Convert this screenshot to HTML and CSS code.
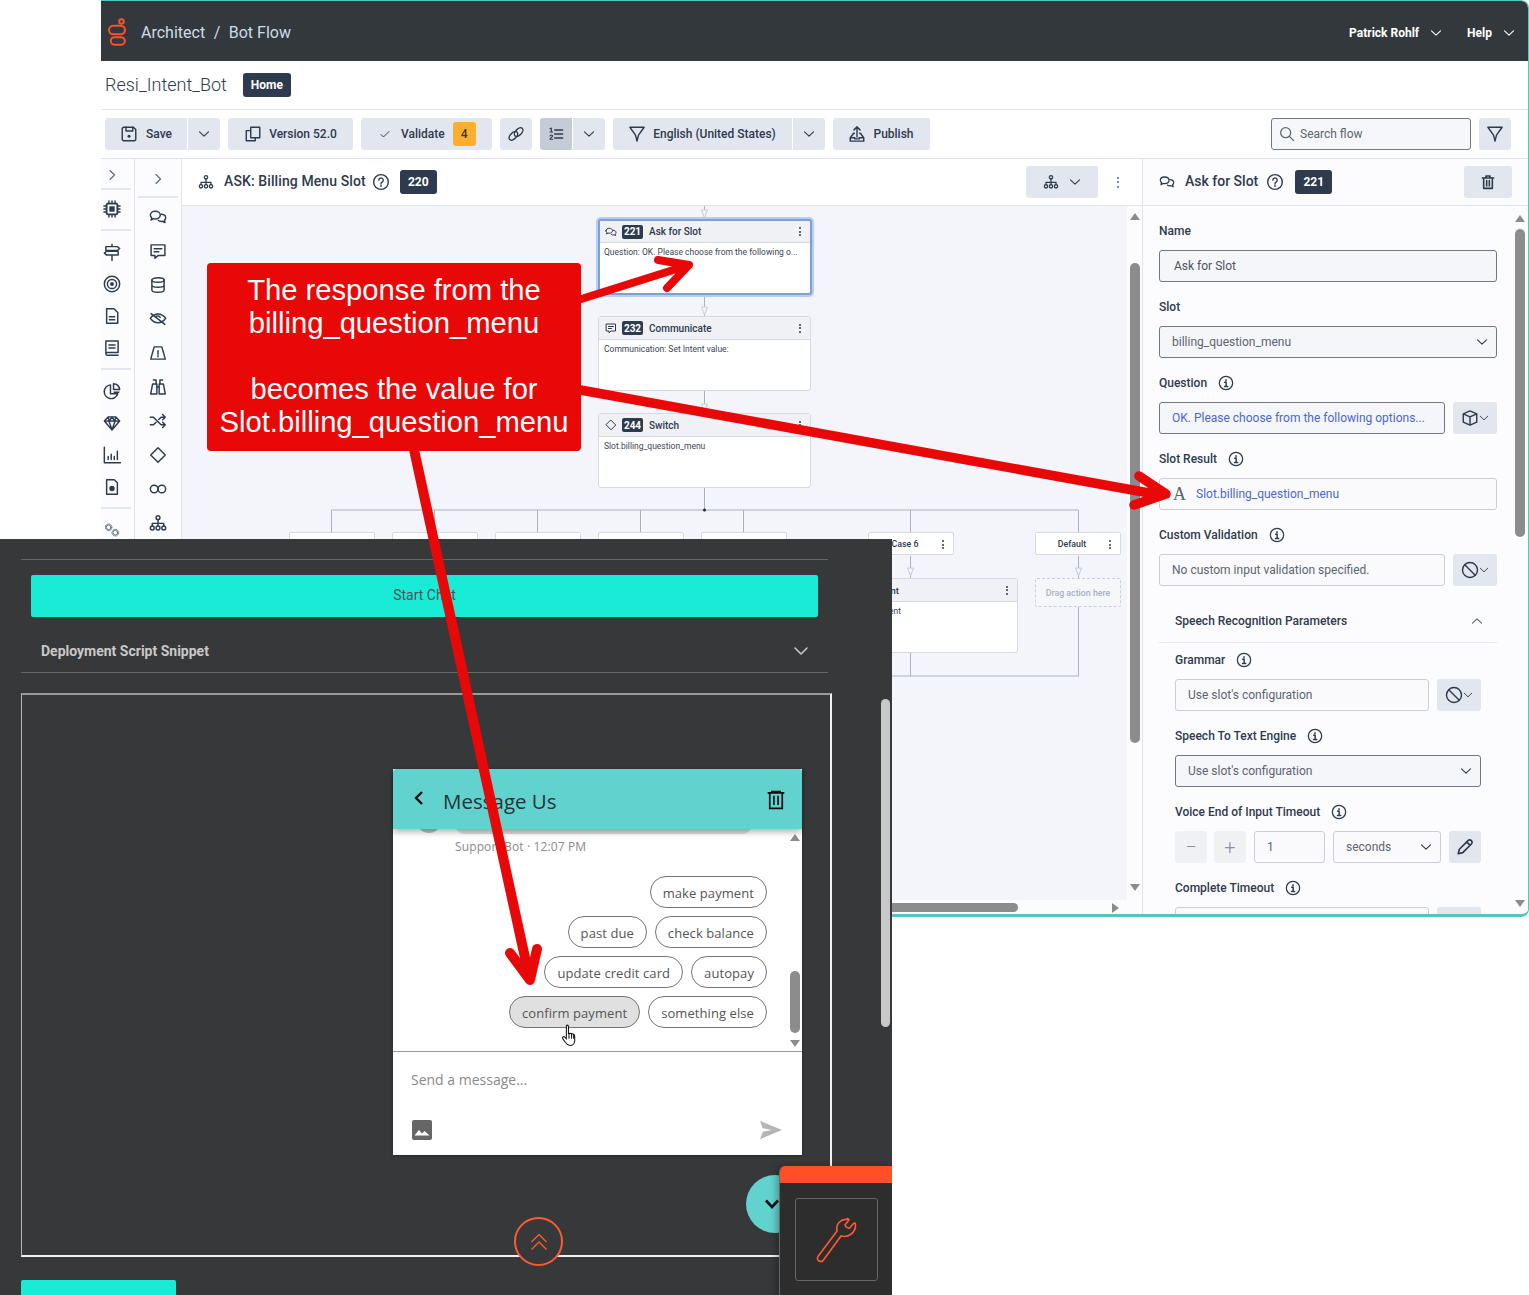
FILE: index.html
```html
<!DOCTYPE html>
<html lang="en">
<head>
<meta charset="utf-8">
<title>Architect - Bot Flow</title>
<link rel="stylesheet" href="styles.css">
</head>
<body>
<svg class="defs" aria-hidden="true">
  <symbol id="chev" viewBox="0 0 12 12"><path stroke-width="1.100" d="M1.500 3.800 6 8.200l4.500-4.400"/></symbol>
  <symbol id="chevr" viewBox="0 0 12 12"><path stroke-width="1.100" d="M4 1.500 8.500 6 4 10.500"/></symbol>
  <symbol id="chat" viewBox="0 0 24 24"><path d="M2 9.500C2 6.500 5 4.500 8.500 4.500s6.500 2 6.500 5-3 5-6.500 5c-1 0-1.800-.1-2.600-.4L3 16l.8-3C2.700 12 2 10.800 2 9.500z"/><path d="M16.500 8.500c3 .2 5.500 2 5.500 4.500 0 1.300-.6 2.400-1.600 3.200l.8 3-3.200-1.600c-1.800.4-4 .2-5.500-1"/></symbol>
  <symbol id="comment" viewBox="0 0 24 24"><path d="M3 4h18v14H12l-4 3.500V18H3z"/><path d="M7 9h10M7 13h6"/></symbol>
  <symbol id="db" viewBox="0 0 24 24"><ellipse cx="12" cy="5.500" rx="8" ry="3"/><path d="M4 5.500v13c0 1.700 3.600 3 8 3s8-1.300 8-3v-13M4 12c0 1.700 3.600 3 8 3s8-1.300 8-3"/></symbol>
  <symbol id="eyeoff" viewBox="0 0 24 24"><path d="M2 11c3-4 6.500-5.500 10-5.500S19 7 22 11c-3 4-6.500 6-10 6s-7-2-10-6z"/><path d="M3 5l18 14M9 9c2-2 5-1 6 1"/></symbol>
  <symbol id="road" viewBox="0 0 24 24"><path d="M7 4h10l4.500 16h-19z"/><path d="M12 9v4.500M12 15.500v1.500"/></symbol>
  <symbol id="binoc" viewBox="0 0 24 24"><path d="M6 3h3.500v5M14.500 8V3H18"/><path d="M2.500 21 5 8h5.500v13zM13.500 21V8H19l2.500 13zM10.500 12h3"/></symbol>
  <symbol id="shuffle" viewBox="0 0 24 24"><path d="M2 7h4l10 10h5M2 17h4l3.500-3.500M13 10l3-3h5M18 3.500 21.500 7 18 10.500M18 13.500l3.500 3.500-3.500 3.500"/></symbol>
  <symbol id="diamond" viewBox="0 0 24 24"><path d="M12 2.500 21.500 12 12 21.500 2.500 12z"/></symbol>
  <symbol id="inf" viewBox="0 0 24 24"><circle cx="7" cy="12" r="5"/><circle cx="17" cy="12" r="5"/></symbol>
  <symbol id="org" viewBox="0 0 24 24"><circle cx="12" cy="5" r="2.500"/><circle cx="4.500" cy="18.500" r="2.500"/><circle cx="12" cy="18.500" r="2.500"/><circle cx="19.500" cy="18.500" r="2.500"/><path d="M12 7.500V16M4.500 16v-3.500h15V16"/></symbol>
  <symbol id="chip" viewBox="0 0 24 24"><rect x="5" y="5" width="14" height="14" rx="1.500" stroke-width="2.400"/><rect x="8.500" y="8.500" width="7" height="7" class="solid"/><path d="M8 1.500V4M12 1.500V4M16 1.500V4M8 20v2.500M12 20v2.500M16 20v2.500M1.500 8H4M1.500 12H4M1.500 16H4M20 8h2.500M20 12h2.500M20 16h2.500"/></symbol>
  <symbol id="sign" viewBox="0 0 24 24"><path d="M12 2v3M12 16v7M4 5h15l3 2.500-3 2.500H4zM20 11H5l-3 2.500L5 16h15z"/></symbol>
  <symbol id="target" viewBox="0 0 24 24"><circle cx="12" cy="12" r="10"/><circle cx="12" cy="12" r="6"/><circle cx="12" cy="12" r="2.500" class="solid"/></symbol>
  <symbol id="doc" viewBox="0 0 24 24"><path d="M5 2.500h9.500L19.500 7.500v14H5z" stroke-linejoin="round"/><path d="M8.500 13h7M8.500 17h7"/></symbol>
  <symbol id="book" viewBox="0 0 24 24"><path d="M4 19V3h16v15H6a2 2 0 0 0-2 2 2 2 0 0 0 2 1.500h14"/><path d="M8 8h8M8 12h8"/></symbol>
  <symbol id="pie" viewBox="0 0 24 24"><path d="M10 4a9 9 0 1 0 9.500 11.500H10z"/><path d="M14 2.500A8 8 0 0 1 22 10h-8z"/><path d="M14 12.500h8a7 7 0 0 1-1 2H14z" class="solid"/></symbol>
  <symbol id="gem" viewBox="0 0 24 24"><path d="M7 4h10l5 5.500L12 21 2 9.500zM2 9.500h20M8 9.500l4 11.500 4-11.500M7 4l1.500 5.500L12 4l3.500 5.500L17 4"/></symbol>
  <symbol id="bars" viewBox="0 0 24 24"><path d="M2 2v20h21M7 18v-4M11 18v-7M15 18v-4M19 18V7"/></symbol>
  <symbol id="report" viewBox="0 0 24 24"><path d="M5 2.500h10l4 4v15H5z"/><circle cx="12" cy="14" r="3.500" class="solid"/></symbol>
  <symbol id="gears" viewBox="0 0 24 24"><circle cx="7" cy="8" r="3.500" stroke-width="1.400"/><circle cx="7" cy="8" r="5" stroke-width="1.400" stroke-dasharray="1.600 1.700"/><circle cx="17" cy="16" r="3.500" stroke-width="1.400"/><circle cx="17" cy="16" r="5" stroke-width="1.400" stroke-dasharray="1.600 1.700"/></symbol>
  <symbol id="saveic" viewBox="0 0 24 24"><path d="M3 4.500 4.500 3H18l3 3v13.500L19.500 21h-15L3 19.500z"/><path d="M8 3v5h9V3"/><circle cx="12" cy="15" r="2" class="solid"/></symbol>
  <symbol id="copy" viewBox="0 0 24 24"><path d="M9 3h12v14H9zM9 7.500H3V21h12v-4"/></symbol>
  <symbol id="check" viewBox="0 0 24 24"><path d="M4 13l5 5L20 7"/></symbol>
  <symbol id="link" viewBox="0 0 24 24"><ellipse cx="8.500" cy="14.500" rx="4" ry="7" transform="rotate(45 8.500 14.500)"/><ellipse cx="15.500" cy="9.500" rx="4" ry="7" transform="rotate(45 15.500 9.500)"/></symbol>
  <symbol id="numlist" viewBox="0 0 24 24"><path d="M10 6h12M10 12h12M10 18h12"/><path d="M3 4l2-1v6M3 9h4" stroke-width="1.600"/><path d="M3 15c0-2 4-2 4 0 0 1.500-4 3-4 5h4" stroke-width="1.600"/></symbol>
  <symbol id="funnel" viewBox="0 0 24 24"><path d="M2.500 3h19L14 13.500l-2 8-2-8z" stroke-linejoin="round"/></symbol>
  <symbol id="upload" viewBox="0 0 24 24"><path d="M12 16V2.500M8 6.500l4-4 4 4M8.500 11H7.500L3 17v4.500h18V17l-4.500-6h-1M3 17h6v1.500h6V17h6"/></symbol>
  <symbol id="search" viewBox="0 0 24 24"><circle cx="10" cy="10" r="7.500"/><path d="M15.500 15.500 22 22"/></symbol>
  <symbol id="help" viewBox="0 0 24 24"><circle cx="12" cy="12" r="10"/><path d="M9 9.500a3 3 0 1 1 4.500 2.600c-1 .6-1.500 1.100-1.500 2.400M12 16.500V18"/></symbol>
  <symbol id="info" viewBox="0 0 24 24"><circle cx="12" cy="12" r="10"/><path d="M10 11h2.200v6M9.800 17.200h4.800M12 7v1.800" stroke-width="2.200"/></symbol>
  <symbol id="trash" viewBox="0 0 24 24"><path d="M3.500 6h17M9 6V3h6v3M5.500 6v15.500h13V6M10 10v8M14 10v8" stroke-width="2.400"/></symbol>
  <symbol id="cube" viewBox="0 0 24 24"><path d="M12 2.500 21 6.500v11l-9 4-9-4v-11zM3 6.500l9 4 9-4M12 10.500v11"/></symbol>
  <symbol id="ban" viewBox="0 0 24 24"><circle cx="12" cy="12" r="10"/><path d="M5 5l14 14"/></symbol>
  <symbol id="pencil" viewBox="0 0 24 24"><path d="M3 21l1.500-6L16 3.500a2.500 2.500 0 0 1 4.500 4.500L9 19.500zM14.500 5.500l4 4" stroke-width="2.200"/></symbol>
</svg>

<section class="arch">
  <header class="topbar">
    <div class="brand">
      <svg class="logo" viewBox="0 0 20 28"><circle cx="13.500" cy="3.500" r="2.300"/><rect x="1" y="7.800" width="16" height="8.400" rx="4.200"/><rect x="2.800" y="19.200" width="14" height="7.500" rx="3.700"/></svg>
      <span>Architect</span><span class="crumb-sep">/</span><span>Bot Flow</span>
    </div>
    <div class="usermenu">
      <span class="usermenu-item">Patrick Rohlf<svg class="ic ic-12"><use href="#chev"/></svg></span>
      <span class="usermenu-item">Help<svg class="ic ic-12"><use href="#chev"/></svg></span>
    </div>
  </header>

  <div class="titlerow">
    <h1 class="flowname">Resi_Intent_Bot</h1>
    <span class="badge badge-home">Home</span>
  </div>

  <div class="toolbar">
    <div class="split">
      <button class="btn btn-save"><svg class="ic ic-18"><use href="#saveic"/></svg>Save</button>
      <button class="btn btn-caret"><svg class="ic ic-12"><use href="#chev"/></svg></button>
    </div>
    <button class="btn btn-version"><svg class="ic ic-18"><use href="#copy"/></svg>Version 52.0</button>
    <button class="btn btn-validate"><svg class="ic ic-12"><use href="#check"/></svg>Validate<span class="count">4</span></button>
    <button class="btn btn-icon"><svg class="ic ic-18"><use href="#link"/></svg></button>
    <div class="split">
      <button class="btn btn-icon btn-active"><svg class="ic ic-16"><use href="#numlist"/></svg></button>
      <button class="btn btn-caret"><svg class="ic ic-12"><use href="#chev"/></svg></button>
    </div>
    <div class="split">
      <button class="btn btn-lang"><svg class="ic ic-18"><use href="#funnel"/></svg>English (United States)</button>
      <button class="btn btn-caret"><svg class="ic ic-12"><use href="#chev"/></svg></button>
    </div>
    <button class="btn btn-publish"><svg class="ic ic-18"><use href="#upload"/></svg>Publish</button>
    <div class="searchbox"><svg class="ic ic-16"><use href="#search"/></svg><span>Search flow</span></div>
    <button class="btn btn-icon btn-filter"><svg class="ic ic-18"><use href="#funnel"/></svg></button>
  </div>

  <div class="workspace">
    <nav class="rail rail-a">
      <svg class="ic ic-12 rail-toggle"><use href="#chevr"/></svg>
      <div class="rail-sep"></div>
      <svg class="ic ic-16 rail-ic rail-first"><use href="#chip"/></svg>
      <div class="rail-sep"></div>
      <svg class="ic ic-16 rail-ic"><use href="#sign"/></svg>
      <svg class="ic ic-16 rail-ic"><use href="#target"/></svg>
      <svg class="ic ic-16 rail-ic"><use href="#doc"/></svg>
      <svg class="ic ic-16 rail-ic"><use href="#book"/></svg>
      <div class="rail-sep"></div>
      <svg class="ic ic-16 rail-ic"><use href="#pie"/></svg>
      <svg class="ic ic-16 rail-ic"><use href="#gem"/></svg>
      <svg class="ic ic-16 rail-ic"><use href="#bars"/></svg>
      <svg class="ic ic-16 rail-ic"><use href="#report"/></svg>
      <div class="rail-sep"></div>
      <svg class="ic ic-16 rail-ic ic-thin"><use href="#gears"/></svg>
    </nav>
    <nav class="rail rail-b">
      <svg class="ic ic-12 rail-toggle"><use href="#chevr"/></svg>
      <div class="rail-sep"></div>
      <svg class="ic ic-16 tool-ic"><use href="#chat"/></svg>
      <svg class="ic ic-16 tool-ic"><use href="#comment"/></svg>
      <svg class="ic ic-16 tool-ic"><use href="#db"/></svg>
      <svg class="ic ic-16 tool-ic"><use href="#eyeoff"/></svg>
      <svg class="ic ic-16 tool-ic"><use href="#road"/></svg>
      <svg class="ic ic-16 tool-ic"><use href="#binoc"/></svg>
      <svg class="ic ic-16 tool-ic"><use href="#shuffle"/></svg>
      <svg class="ic ic-16 tool-ic"><use href="#diamond"/></svg>
      <svg class="ic ic-16 tool-ic"><use href="#inf"/></svg>
      <svg class="ic ic-16 tool-ic"><use href="#org"/></svg>
    </nav>

    <main class="flow">
      <div class="flow-head">
        <svg class="ic ic-16"><use href="#org"/></svg>
        <span class="flow-title">ASK: Billing Menu Slot</span>
        <svg class="ic ic-16 ic-help"><use href="#help"/></svg>
        <span class="badge badge-id">220</span>
        <span class="flow-tools">
          <button class="btn btn-layout"><svg class="ic ic-16"><use href="#org"/></svg><svg class="ic ic-12"><use href="#chev"/></svg></button>
          <span class="kebab kebab-blue"><i></i><i></i><i></i></span>
        </span>
      </div>
      <div class="flow-body">
        <div class="canvas">
          <svg class="wires" viewBox="0 0 945 694">
            <path d="M522.500 0v14M522.500 88v23M522.500 185v23M522.500 282v22M149.500 304H896M149.500 304v23M252.500 304v23M355.500 304v23M458.500 304v23M561.500 304v23M728.500 304v23M896.500 304v23M728.500 350v23M896.500 350v23M728.500 447v23M896.500 401v69M700 470h197"/>
            <path class="arrowhead" d="M519.500 4h6l-3 8zM519.500 101h6l-3 8zM519.500 198h6l-3 8zM725.500 362h6l-3 8zM893.500 362h6l-3 8z"/>
            <circle cx="522.500" cy="304" r="1.500" class="dot"/>
          </svg>

          <article class="node node-selected node-1">
            <div class="node-head"><svg class="ic ic-12"><use href="#chat"/></svg><span class="badge badge-node">221</span><b>Ask for Slot</b><span class="kebab kebab-node"><i></i><i></i><i></i></span></div>
            <p>Question: OK. Please choose from the following o...</p>
          </article>
          <article class="node node-2">
            <div class="node-head"><svg class="ic ic-12"><use href="#comment"/></svg><span class="badge badge-node">232</span><b>Communicate</b><span class="kebab kebab-node"><i></i><i></i><i></i></span></div>
            <p>Communication: Set Intent value:</p>
          </article>
          <article class="node node-3">
            <div class="node-head"><svg class="ic ic-12"><use href="#diamond"/></svg><span class="badge badge-node">244</span><b>Switch</b><span class="kebab kebab-node"><i></i><i></i><i></i></span></div>
            <p>Slot.billing_question_menu</p>
          </article>

          <div class="case case-1"></div>
          <div class="case case-2"></div>
          <div class="case case-3"></div>
          <div class="case case-4"></div>
          <div class="case case-5"></div>
          <div class="case case-6"><span>Case 6</span><span class="kebab kebab-node"><i></i><i></i><i></i></span></div>
          <div class="case case-7"><span>Default</span><span class="kebab kebab-node"><i></i><i></i><i></i></span></div>

          <article class="node node-4">
            <div class="node-head"><b class="node-tail">Set Intent</b><span class="kebab kebab-node"><i></i><i></i><i></i></span></div>
            <p class="node-tail">Set Intent</p>
          </article>
          <div class="dropzone">Drag action here</div>
        </div>
        <div class="sb sb-flow-v"><span class="sb-up"></span><span class="sb-thumb"></span><span class="sb-down"></span></div>
        <div class="sb-flow-h"><span class="sb-thumb"></span><span class="sb-right"></span></div>
      </div>
    </main>

    <aside class="props">
      <div class="props-head">
        <svg class="ic ic-16"><use href="#chat"/></svg>
        <span class="props-title">Ask for Slot</span>
        <svg class="ic ic-16 ic-help"><use href="#help"/></svg>
        <span class="badge badge-id">221</span>
        <button class="btn btn-trash"><svg class="ic ic-16"><use href="#trash"/></svg></button>
      </div>
      <div class="props-body">
        <div class="field">
          <label class="label">Name</label>
          <div class="input input-strong input-name">Ask for Slot</div>
        </div>
        <div class="field">
          <label class="label">Slot</label>
          <div class="input input-strong">billing_question_menu<svg class="ic ic-12 input-caret"><use href="#chev"/></svg></div>
        </div>
        <div class="field">
          <label class="label">Question<svg class="ic ic-16"><use href="#info"/></svg></label>
          <div class="input-row">
            <div class="input input-strong input-blue">OK. Please choose from the following options...</div>
            <button class="btn btn-mode"><svg class="ic ic-18"><use href="#cube"/></svg><svg class="ic ic-10"><use href="#chev"/></svg></button>
          </div>
        </div>
        <div class="field">
          <label class="label">Slot Result<svg class="ic ic-16"><use href="#info"/></svg></label>
          <div class="input input-blue input-var"><span class="type-a">A</span>Slot.billing_question_menu</div>
        </div>
        <div class="field">
          <label class="label">Custom Validation<svg class="ic ic-16"><use href="#info"/></svg></label>
          <div class="input-row">
            <div class="input">No custom input validation specified.</div>
            <button class="btn btn-mode"><svg class="ic ic-18"><use href="#ban"/></svg><svg class="ic ic-10"><use href="#chev"/></svg></button>
          </div>
        </div>
        <div class="section-head"><span>Speech Recognition Parameters</span><svg class="ic ic-12 flip"><use href="#chev"/></svg></div>
        <div class="section-body">
          <div class="field">
            <label class="label">Grammar<svg class="ic ic-16"><use href="#info"/></svg></label>
            <div class="input-row">
              <div class="input">Use slot's configuration</div>
              <button class="btn btn-mode"><svg class="ic ic-18"><use href="#ban"/></svg><svg class="ic ic-10"><use href="#chev"/></svg></button>
            </div>
          </div>
          <div class="field">
            <label class="label">Speech To Text Engine<svg class="ic ic-16"><use href="#info"/></svg></label>
            <div class="input input-strong">Use slot's configuration<svg class="ic ic-12 input-caret"><use href="#chev"/></svg></div>
          </div>
          <div class="field">
            <label class="label">Voice End of Input Timeout<svg class="ic ic-16"><use href="#info"/></svg></label>
            <div class="input-row">
              <button class="btn btn-step">&minus;</button>
              <button class="btn btn-step">+</button>
              <div class="input input-num">1</div>
              <div class="input input-unit">seconds<svg class="ic ic-12 input-caret"><use href="#chev"/></svg></div>
              <button class="btn btn-pencil"><svg class="ic ic-18"><use href="#pencil"/></svg></button>
            </div>
          </div>
          <div class="field">
            <label class="label">Complete Timeout<svg class="ic ic-16"><use href="#info"/></svg></label>
            <div class="input-row">
              <div class="input"></div>
              <button class="btn btn-mode"></button>
            </div>
          </div>
        </div>
      </div>
      <div class="sb sb-props"><span class="sb-up"></span><span class="sb-thumb"></span><span class="sb-down"></span></div>
    </aside>
  </div>
</section>

<section class="dock">
  <div class="dock-rule"></div>
  <button class="start-chat">Start Chat</button>
  <div class="snippet"><span>Deployment Script Snippet</span><svg class="ic ic-16 ic-light"><use href="#chev"/></svg></div>
  <div class="preview"></div>
  <button class="dock-cta"></button>
  <span class="dock-scroll"></span>

  <div class="chat">
    <div class="chat-head">
      <svg class="chat-back" viewBox="0 0 12 16"><path d="M9 2 3 8l6 6"/></svg>
      <span class="chat-title">Message Us</span>
      <svg class="chat-trash" viewBox="0 0 24 24"><path d="M2 3.500h20M7 3.500V2h10v1.500M4.500 3.500V22h15V3.500M9.500 7v11M14.500 7v11"/></svg>
    </div>
    <div class="chat-body">
      <span class="bubble-stub"></span>
      <span class="avatar-stub"></span>
      <div class="sender">Support Bot · 12:07 PM</div>
      <div class="chips">
        <div class="chip-row"><span class="chip">make payment</span></div>
        <div class="chip-row"><span class="chip">past due</span><span class="chip">check balance</span></div>
        <div class="chip-row"><span class="chip">update credit card</span><span class="chip">autopay</span></div>
        <div class="chip-row"><span class="chip chip-hover">confirm payment</span><span class="chip">something else</span></div>
      </div>
      <svg class="hand" viewBox="0 0 16 22"><path d="M5 1.500c.8-.8 2-.4 2 .8V9l1-.2 1 .2 1.200.2 1.300.4c1.200.4 1.500 1.300 1.500 2.400V16c0 2.500-2 4.500-4.500 4.500S5 19 4 17.500L1.500 14c-.8-1.300.8-2.500 2-1.500L5 14z"/><path d="M7.500 9v5M10 9.500V14M12 10v4"/></svg>
      <div class="sb sb-chat"><span class="sb-up"></span><span class="sb-thumb"></span><span class="sb-down"></span></div>
    </div>
    <div class="chat-foot">
      <div class="chat-placeholder">Send a message...</div>
      <div class="chat-actions">
        <svg class="chat-image" viewBox="0 0 20 20"><path d="M2 0h16a2 2 0 0 1 2 2v16a2 2 0 0 1-2 2H2a2 2 0 0 1-2-2V2a2 2 0 0 1 2-2z"/><path class="cutout" d="M2.500 15.500 7 10l3 3.500 2.500-2.500 5 4.500z"/></svg>
        <svg class="chat-send" viewBox="0 0 24 20"><path d="M0 0 24 10 0 20l3-8 10-2-10-2z"/></svg>
      </div>
    </div>
  </div>

  <div class="chat-fab"><svg viewBox="0 0 16 12"><path d="M2 2.500 8 9l6-6.500"/></svg></div>
  <div class="collapse"><svg viewBox="0 0 24 24"><path d="M3 12 12 3l9 9M3 21l9-9 9 9"/></svg></div>
  <div class="toolpanel">
    <div class="toolpanel-bar"></div>
    <div class="toolpanel-box">
      <svg viewBox="0 0 48 48"><path d="M34.500 3.500c-6.500-1-12 4.500-10.500 11.500L5 40.500c-2.500 4 3.500 7 5.500 3.500l17.500-24c7.500 2 15-3.500 14.500-11.500-.1-1.500-1-2-2-1l-4 4.500c-1.500.5-4-1-4.500-3l3.500-4.500c.8-1 .2-1.800-1-2z"/></svg>
    </div>
  </div>
</section>

<svg class="annot-arrows" viewBox="0 0 1529 1295" aria-hidden="true">
  <path class="arr arr-thin" d="M575 301 686 266M658 260 689 265 667 288"/>
  <path class="arr arr-mid" d="M575 389 1160 495M1139 476 1166 494 1134 505"/>
  <path class="arr arr-thick" d="M413 445 529 976M510 953 530 980 537 949"/>
</svg>
<div class="annot-box">The response from the<br>billing_question_menu<br><br>becomes the value for<br>Slot.billing_question_menu</div>
</body>
</html>
```

FILE: styles.css
```css
* { box-sizing: border-box; }
html, body { margin: 0; padding: 0; }
body {
  position: relative;
  width: 1529px;
  height: 1295px;
  overflow: hidden;
  background: #fff;
  font-family: Roboto, "Liberation Sans", sans-serif;
  color: #2e3a4d;
}
button { font: inherit; color: inherit; border: 0; margin: 0; cursor: default; }
p, h1 { margin: 0; }
.defs { position: absolute; width: 0; height: 0; }

/* icons */
.ic { display: block; flex: none; fill: none; stroke: currentColor; stroke-width: 1.900; stroke-linecap: round; stroke-linejoin: round; overflow: visible; }
symbol { overflow: visible; }
.solid { fill: currentColor; stroke: none; }
.ic-10 { width: 10px; height: 10px; }
.ic-12 { width: 12px; height: 12px; }
.ic-16 { width: 16px; height: 16px; }
.ic-18 { width: 18px; height: 18px; }
.ic-light { color: #ccc; }
.ic-thin { color: #5f6a78; }
.ic-help { transform: scale(1.1); }
.flip { transform: rotate(180deg); }

/* architect window */
.arch {
  position: absolute;
  left: 101px;
  top: 0;
  width: 1428px;
  height: 917px;
  display: flex;
  flex-direction: column;
  overflow: hidden;
  background: #fff;
  border-top: 1px solid #4fc8c4;
  border-right: 1px solid #4fc8c4;
  border-bottom: 3px solid #4fc8c4;
  border-radius: 0 8px 8px 0;
}
.topbar {
  flex: none;
  height: 60px;
  background: #33383d;
  display: flex;
  align-items: center;
  justify-content: space-between;
  padding: 2px 13px 0 7px;
}
.brand { display: flex; align-items: center; font-size: 16px; color: #cddde8; }
.logo { width: 20px; height: 28px; margin-right: 13px; margin-top: -1px; fill: none; stroke: #ff4f28; stroke-width: 2; }
.crumb-sep { margin: 0 8.500px; }
.usermenu { display: flex; gap: 25px; margin-top: 1px; color: #fff; font-size: 12px; font-weight: 700; }
.usermenu-item { display: flex; align-items: center; gap: 11px; }
.titlerow {
  flex: none;
  height: 49px;
  display: flex;
  align-items: center;
  padding-left: 4px;
  border-bottom: 1px solid #e0e3ec;
}
.flowname { font-size: 18px; font-weight: 300; color: #2e3a4d; margin: -2px 16px 0 0; }
.badge {
  display: inline-flex;
  align-items: center;
  justify-content: center;
  background: #2e3a4d;
  color: #fff;
  border-radius: 3px;
  font-weight: 700;
}
.badge-home { width: 48px; height: 24px; font-size: 12px; }
.badge-id { width: 37px; height: 24px; font-size: 12px; }

.toolbar {
  flex: none;
  height: 49px;
  display: flex;
  align-items: center;
  gap: 8px;
  padding: 0 17px 0 4px;
  border-bottom: 1px solid #e0e3ec;
}
.split { display: flex; gap: 1px; }
.btn {
  height: 32px;
  display: flex;
  align-items: center;
  justify-content: center;
  background: #e2e6ef;
  border-radius: 3px;
  font-size: 12px;
  font-weight: 500;
  padding: 0;
}
.btn-save { width: 82px; gap: 8px; border-radius: 3px 0 0 3px; }
.btn-caret { width: 32px; border-radius: 0 3px 3px 0; }
.btn-version { width: 125px; gap: 7px; }
.btn-validate { width: 131px; gap: 10px; justify-content: flex-start; padding-left: 18px; }
.count { width: 23px; height: 24px; margin-left: -2px; border-radius: 3px; background: #ffae2b; display: flex; align-items: center; justify-content: center; font-weight: 500; }
.btn-icon { width: 32px; }
.btn-active { background: #c5ccd7; border-radius: 3px 0 0 3px; }
.btn-lang { width: 179px; gap: 7px; padding-right: 1px; border-radius: 3px 0 0 3px; }
.btn-publish { width: 97px; gap: 7px; padding-right: 1px; }
.searchbox {
  width: 200px;
  height: 32px;
  margin-left: auto;
  display: flex;
  align-items: center;
  gap: 5px;
  padding-left: 7px;
  font-size: 12px;
  color: #5b6470;
  background: #f6f7fb;
  border: 1px solid #6f7885;
  border-radius: 3px;
}

/* work area */
.workspace { flex: 1; min-height: 0; display: flex; }
.rail { flex: none; display: flex; flex-direction: column; align-items: center; background: #fcfcfe; border-right: 1px solid #e0e3ec; }
.rail-a { width: 34px; padding-right: 11px; }
.rail-b { width: 47px; }
.rail-toggle { color: #5b6470; }
.rail-a .rail-toggle { margin: 10px 0 7px; }
.rail-b .rail-toggle { margin: 14px 0 11px; }
.rail-sep { width: 30px; height: 2px; background: #e2e6ef; flex: none; align-self: flex-start; }
.rail-b .rail-sep { width: 40px; margin-left: 3px; }
.rail-ic { margin: 8px 0; transform: scale(1.15); }
.rail-sep + .rail-ic { margin-top: 13px; }
.rail-sep + .rail-first { margin-top: 11px; }
.rail-ic + .rail-sep { margin-top: 4px; }
.rail-ic.ic-thin { transform: none; }
.tool-ic { margin: 9px 0; transform: scale(1.15); }
.rail-sep + .tool-ic { margin-top: 11px; }

.flow { flex: 1; min-width: 0; display: flex; flex-direction: column; border-right: 1px solid #dfe3ec; }
.flow-head {
  flex: none;
  height: 47px;
  display: flex;
  align-items: center;
  padding: 0 16px;
  gap: 7px;
  border-bottom: 1px solid #e0e3ec;
}
.flow-title { font-size: 14px; font-weight: 500; margin: -3px 0 0 3px; letter-spacing: .1px; }
.flow-head .badge-id { margin-left: 4px; }
.flow-tools { margin-left: auto; display: flex; align-items: center; gap: 19px; }
.btn-layout { width: 72px; gap: 10px; }
.kebab { display: flex; flex-direction: column; gap: 2px; }
.kebab i { display: block; width: 2px; height: 2px; border-radius: 50%; background: #2e3a4d; }
.kebab-blue { margin-right: 7px; gap: 2.500px; }
.kebab-blue i { background: #3a66c4; }
.flow-body { position: relative; flex: 1; min-height: 0; background: #fcfcfe; }
.canvas { position: absolute; left: 0; top: 0; width: 945px; height: 694px; background: #f3f5fb; overflow: hidden; }
.wires { position: absolute; inset: 0; width: 945px; height: 694px; fill: none; stroke: #a9b3c4; stroke-width: 1; }
.arrowhead { fill: #f3f5fb; stroke: #c5ccd8; }
.dot { fill: #222; stroke: none; }

.node {
  position: absolute;
  width: 213px;
  height: 75px;
  background: #fff;
  border: 1px solid #d5d9e3;
  border-radius: 3px;
}
.node-selected { border: 2px solid #7f9ed8; box-shadow: 0 0 0 2px #b5cdf7; }
.node-1 { left: 416px; top: 13px; width: 214px; height: 76px; }
.node-2 { left: 416px; top: 110px; }
.node-3 { left: 416px; top: 207px; }
.node-4 { left: 622px; top: 372px; width: 214px; }
.node-head {
  height: 23px;
  display: flex;
  align-items: center;
  gap: 5px;
  padding: 0 9px 0 6px;
  background: #f0f1f5;
  border-bottom: 1px solid #d5d9e3;
  font-size: 10px;
}
.node-head svg { stroke-width: 2; }
.node-head b { font-weight: 500; margin-left: 1px; }
.node-selected .node-head { height: 22px; padding: 0 9px 0 5px; }
.badge-node { width: 21px; height: 14px; font-size: 10px; border-radius: 2px; }
.kebab-node { margin-left: auto; gap: 1.500px; }
.node p { font-size: 8.500px; line-height: 12px; padding: 3px 5px; color: #3b4655; white-space: nowrap; overflow: hidden; }
.node-selected p { padding: 3px 4px; }
.node-4 .node-head b { width: 88px; margin: 0; text-align: right; font-size: 9.500px; }
.node-4 p { width: 96px; padding: 3px 0; text-align: right; }
.case {
  position: absolute;
  top: 326px;
  width: 86px;
  height: 23px;
  background: #fff;
  border: 1px solid #d5d9e3;
  border-radius: 2px;
  display: flex;
  align-items: center;
  justify-content: center;
  padding-right: 12px;
  font-size: 8.800px;
  font-weight: 500;
}
.case .kebab { position: absolute; right: 9px; top: 7px; }
.case-1 { left: 107px; }
.case-2 { left: 210px; }
.case-3 { left: 313px; }
.case-4 { left: 416px; }
.case-5 { left: 519px; }
.case-6 { left: 686px; }
.case-7 { left: 853px; }
.dropzone {
  position: absolute;
  left: 853px;
  top: 372px;
  width: 86px;
  height: 29px;
  border: 1px dashed #c9cfdb;
  border-radius: 2px;
  background: #f6f7fb;
  display: flex;
  align-items: center;
  justify-content: center;
  font-size: 8.800px;
  font-weight: 500;
  color: #a9b1bf;
}

/* scrollbars */
.sb { position: absolute; width: 10px; }
.sb-thumb { position: absolute; left: 0; right: 0; background: #8c8c8c; border-radius: 5px; }
.sb-up, .sb-down { position: absolute; left: 0; width: 0; height: 0; border-left: 5px solid transparent; border-right: 5px solid transparent; }
.sb-up { border-bottom: 7px solid #8c8c8c; }
.sb-down { border-top: 7px solid #8c8c8c; }
.sb-flow-v { left: 948px; top: 0; height: 700px; }
.sb-flow-v .sb-up { top: 7px; }
.sb-flow-v .sb-thumb { top: 57px; height: 480px; }
.sb-flow-v .sb-down { top: 678px; }
.sb-flow-h { position: absolute; left: 0; top: 697px; width: 945px; height: 9px; }
.sb-flow-h .sb-thumb { left: 640px; right: 109px; top: 0; bottom: 0; }
.sb-right { position: absolute; left: 930px; top: 0; width: 0; height: 0; border-top: 5px solid transparent; border-bottom: 5px solid transparent; border-left: 7px solid #8c8c8c; }

/* properties */
.props { position: relative; flex: none; width: 385px; display: flex; flex-direction: column; background: #fcfcfe; }
.props-head {
  flex: none;
  height: 47px;
  display: flex;
  align-items: center;
  gap: 9px;
  padding: 0 16px;
  border-bottom: 1px solid #e0e3ec;
}
.props-title { font-size: 14px; font-weight: 500; margin: -3px 0 0 1px; }
.props-head .badge-id { margin-left: 3px; }
.btn-trash { width: 48px; margin-left: auto; }
.props-body { flex: 1; min-height: 0; overflow: hidden; padding: 17px 31px 0 16px; }
.field { margin-bottom: 17px; }
.label { display: flex; align-items: center; gap: 11px; height: 16px; margin-bottom: 11px; font-size: 12px; font-weight: 500; line-height: 16px; }
.input-row { display: flex; gap: 8px; }
.input {
  flex: 1;
  min-width: 0;
  height: 32px;
  display: flex;
  align-items: center;
  padding: 0 12px;
  font-size: 12px;
  color: #5b6470;
  background: #fafafc;
  border: 1px solid #c9ced8;
  border-radius: 3px;
  white-space: nowrap;
}
.input-strong { background: #f5f6fa; border-color: #6f7885; }
.input-name { padding-left: 14px; color: #4a5462; }
.input-blue { color: #4a68c9; }
.input-var { padding-left: 13px; }
.type-a { font-family: "Liberation Serif", serif; font-size: 18px; color: #5b6470; margin-right: 10px; }
.input-caret { margin-left: auto; margin-right: -4px; color: #2e3a4d; }
.btn-mode { flex: none; width: 44px; gap: 0; }
.section-head {
  height: 40px;
  display: flex;
  align-items: center;
  justify-content: space-between;
  padding: 0 14px 3px 16px;
  border-bottom: 1px solid #e2e6ef;
  font-size: 12px;
  font-weight: 500;
}
.section-head .ic { color: #5b6470; }
.section-body { padding: 9px 16px 0; }
.btn-step { flex: none; width: 32px; background: #f0f1f5; color: #8b93a0; font-size: 20px; font-weight: 300; }
.btn-step + .btn-step { margin-left: -1px; }
.input-num { flex: none; width: 71px; }
.input-unit { flex: none; width: 108px; }
.btn-pencil { flex: none; width: 32px; }
.sb-props { right: 3px; top: 47px; height: 710px; }
.sb-props .sb-up { top: 9px; }
.sb-props .sb-thumb { top: 23px; height: 308px; }
.sb-props .sb-down { top: 694px; }

/* dark dock window */
.dock {
  position: absolute;
  left: 0;
  top: 539px;
  width: 892px;
  height: 756px;
  overflow: hidden;
  isolation: isolate;
  background: #37383a;
}
.dock-rule { height: 1px; margin: 20px 64px 0 21px; background: #666; }
.start-chat {
  display: block;
  width: 787px;
  height: 42px;
  margin: 15px 0 0 31px;
  padding: 0 0 2px;
  background: #1aebd6;
  border-radius: 2px;
  font-size: 14px;
  color: #4d5358;
}
.snippet {
  height: 56px;
  margin: 0 64px 0 21px;
  padding: 12px 19px 0 20px;
  display: flex;
  align-items: center;
  justify-content: space-between;
  font-size: 14px;
  font-weight: 700;
  color: #c9c9c9;
  border-bottom: 1px solid #666;
}
.preview {
  width: 811px;
  height: 564px;
  margin: 20px 0 0 21px;
  border-style: solid;
  border-width: 2px 2px 2px 1px;
  border-color: #9a9a9a #f2f2f2 #f2f2f2 #b5b5b5;
}
.dock-cta { display: block; width: 155px; height: 40px; margin: 23px 0 0 21px; background: #1aebd6; border-radius: 2px; }
.dock-scroll { position: absolute; left: 881px; top: 160px; width: 9px; height: 328px; background: #c8c8c8; border-radius: 5px; }

.chat {
  position: absolute;
  left: 393px;
  top: 230px;
  width: 409px;
  height: 386px;
  display: flex;
  flex-direction: column;
  background: #fff;
  font-family: "Open Sans", "Noto Sans", sans-serif;
  box-shadow: 0 1px 3px rgba(0,0,0,.3);
}
.chat-head {
  position: relative;
  z-index: 1;
  flex: none;
  height: 60px;
  display: flex;
  align-items: center;
  padding: 0 16px 0 20px;
  background: #62d2cf;
  border-radius: 3px 3px 0 0;
  box-shadow: 0 3px 6px rgba(0,0,0,.3);
  color: #263238;
}
.chat-back { width: 12px; height: 16px; margin-right: 18px; margin-top: -3px; fill: none; stroke: #111; stroke-width: 2.400; }
.chat-title { font-size: 20.500px; line-height: 28px; margin-top: 4px; }
.chat-trash { width: 20px; height: 22px; margin-left: auto; margin-top: 2px; fill: none; stroke: #111; stroke-width: 2; }
.chat-body { position: relative; flex: none; height: 222px; overflow: hidden; }
.bubble-stub { position: absolute; left: 63px; top: -20px; width: 295px; height: 25px; background: #dedede; border-radius: 8px; }
.avatar-stub { position: absolute; left: 24px; top: -20px; width: 24px; height: 24px; background: #bdbdbd; border-radius: 50%; }
.sender { margin: 10px 0 0 62px; font-size: 12px; line-height: 16px; letter-spacing: .12px; color: #8a8a8a; }
.chips { display: flex; flex-direction: column; gap: 8px; margin-top: 21px; padding-right: 35px; }
.chip-row { display: flex; justify-content: flex-end; gap: 8px; }
.chip {
  height: 32px;
  display: flex;
  align-items: center;
  padding: 2px 12px 0;
  border: 1px solid #757575;
  border-radius: 16px;
  font-size: 13px;
  letter-spacing: .08px;
  color: #555;
  background: #fff;
  white-space: nowrap;
}
.chip-hover { background: #e0e0e0; }
.hand { position: absolute; left: 168px; top: 195px; width: 17px; height: 23px; fill: #fff; stroke: #111; stroke-width: 1; }
.sb-chat { left: 397px; top: 0; height: 222px; }
.sb-chat .sb-up { top: 5px; }
.sb-chat .sb-thumb { top: 142px; height: 62px; }
.sb-chat .sb-down { top: 211px; }
.chat-foot { flex: none; height: 104px; border-top: 1px solid #9a9a9a; padding: 18px 20px 0 18px; }
.chat-placeholder { font-size: 14px; line-height: 20px; color: #8a8a8a; }
.chat-actions { display: flex; justify-content: space-between; align-items: center; margin-top: 30px; padding-left: 1px; }
.chat-image { width: 20px; height: 20px; fill: #666; }
.chat-image .cutout { fill: #fff; }
.chat-send { width: 22px; height: 20px; fill: #b5b5b5; }
.chat-fab { position: absolute; left: 746px; top: 636px; width: 58px; height: 58px; border-radius: 50%; background: #62d2cf; display: flex; align-items: center; padding-left: 18px; }
.chat-fab svg { width: 16px; height: 12px; fill: none; stroke: #111; stroke-width: 2.600; }
.collapse { position: absolute; left: 514px; top: 678px; width: 49px; height: 49px; border: 2px solid #ff5a33; border-radius: 50%; background: #37383a; display: flex; align-items: center; justify-content: center; }
.collapse svg { width: 20px; height: 20px; fill: none; stroke: #ff5a33; stroke-width: 1.500; }
.toolpanel { position: absolute; left: 779px; top: 627px; width: 113px; height: 129px; background: #2d2d2d; border-left: 1px solid #666; border-radius: 6px 0 0 0; overflow: hidden; box-shadow: -3px 0 6px rgba(0,0,0,.25); }
.toolpanel-bar { height: 17px; background: #ff4f28; }
.toolpanel-box { width: 83px; height: 83px; margin: 15px 0 0 15px; border: 1px solid #666; border-radius: 3px; display: flex; align-items: center; justify-content: center; }
.toolpanel-box svg { width: 48px; height: 48px; fill: none; stroke: #ff5a33; stroke-width: 1.600; }

/* annotations */
.annot-arrows { position: absolute; left: 0; top: 0; width: 1529px; height: 1295px; pointer-events: none; }
.arr { fill: none; stroke: #e90808; stroke-linecap: round; stroke-linejoin: round; }
.arr-thin { stroke-width: 8; }
.arr-mid { stroke-width: 9.500; }
.arr-thick { stroke-width: 10; }
.annot-box {
  position: absolute;
  left: 207px;
  top: 263px;
  width: 374px;
  height: 188px;
  padding-top: 11px;
  background: #e90808;
  border-radius: 4px;
  color: #fff;
  font-family: "Liberation Sans", Arial, sans-serif;
  font-size: 29.200px;
  line-height: 33px;
  text-align: center;
}
```
